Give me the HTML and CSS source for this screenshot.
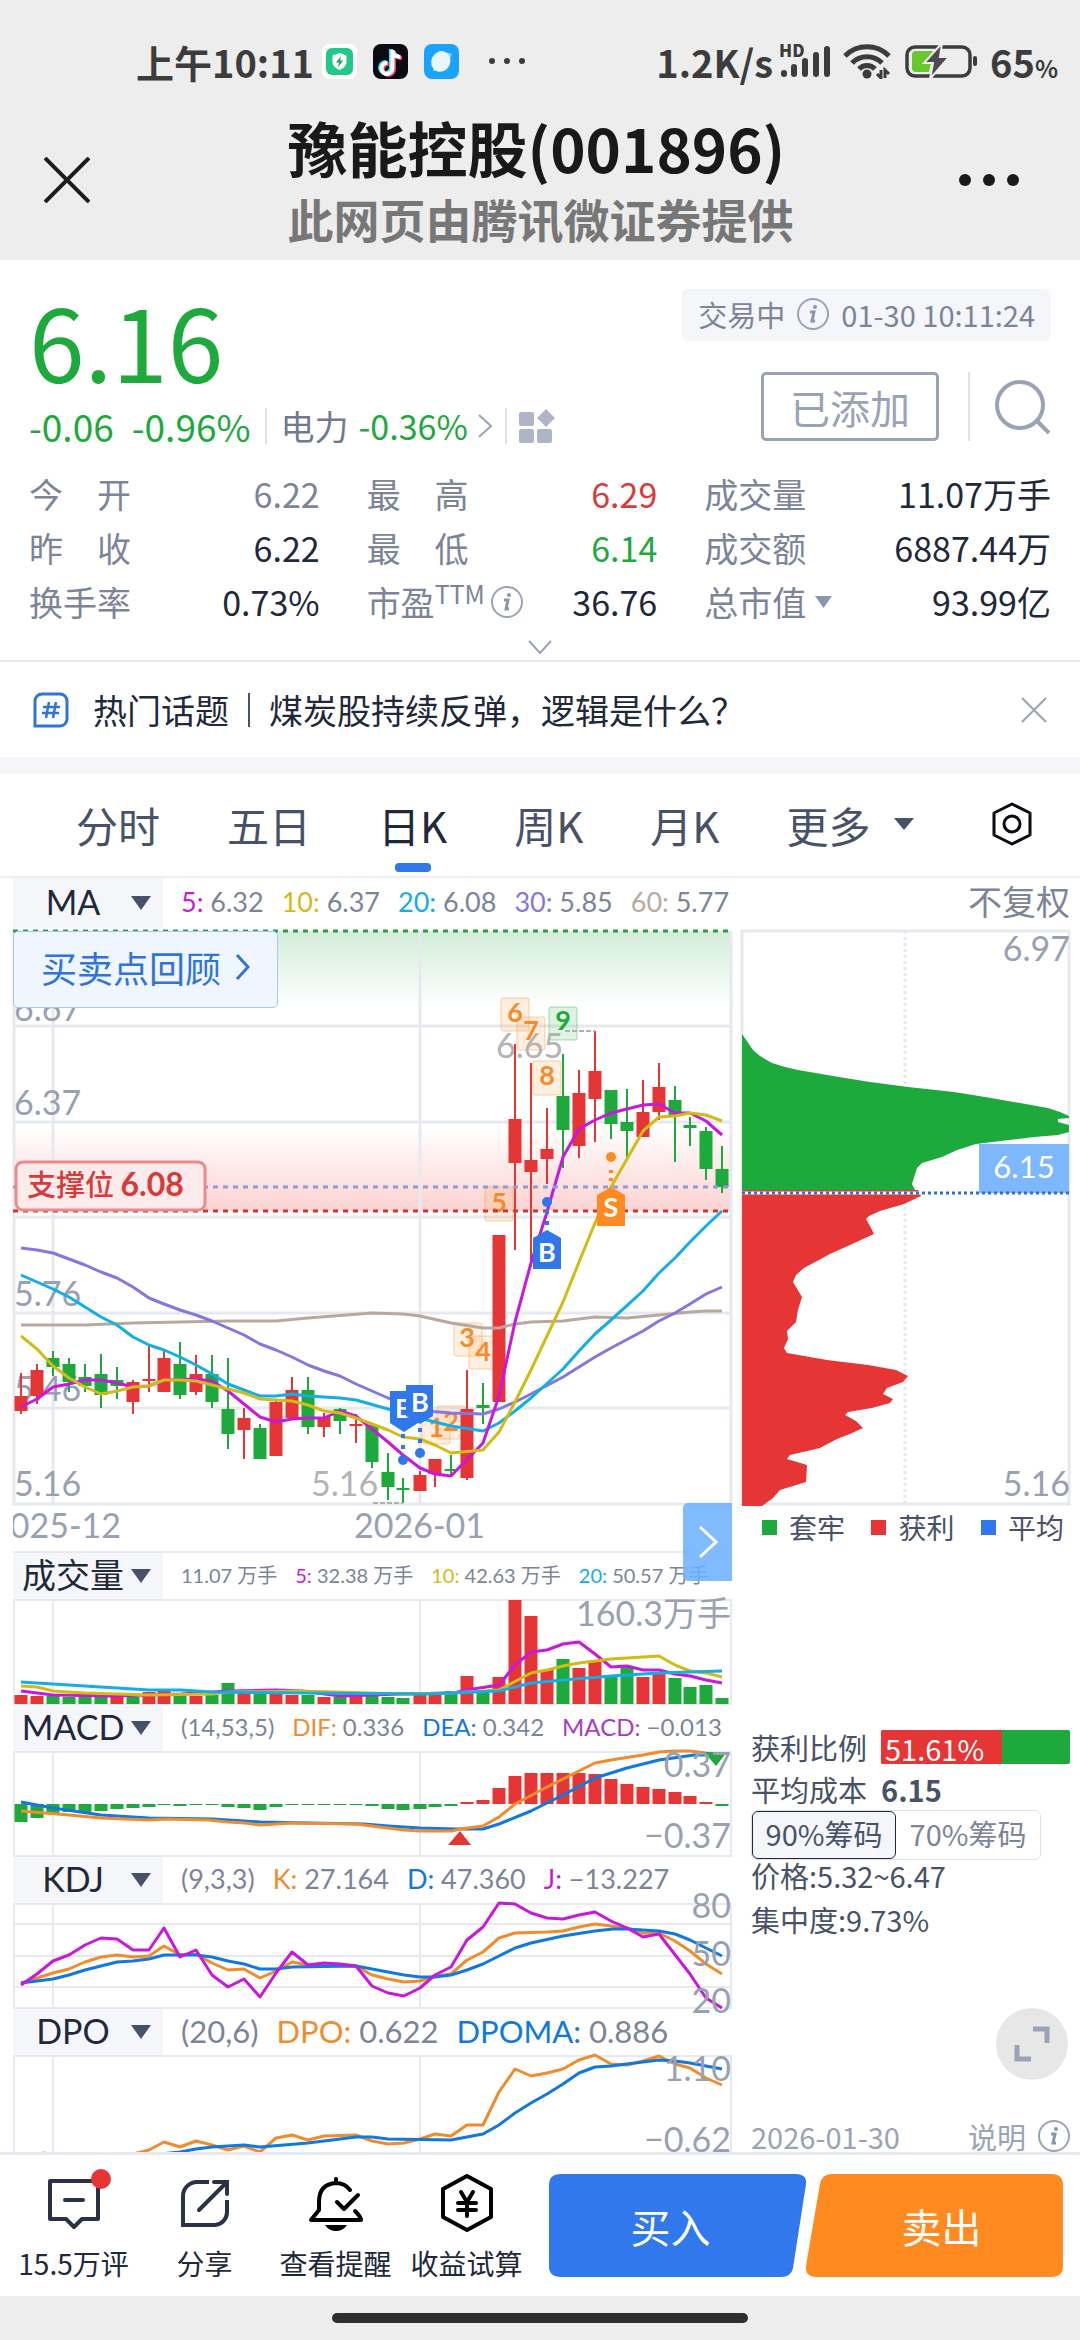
FILE: index.html
```html
<!DOCTYPE html>
<html lang="zh-CN">
<head>
<meta charset="utf-8">
<meta name="viewport" content="width=device-width, initial-scale=1">
<title>豫能控股(001896)</title>
<link rel="stylesheet" href="styles.css">
</head>
<body>
<header class="top">
  <div class="status">
    <div class="status-left">
      <span>上午10:11</span>
      <svg class="app" viewBox="0 0 35 35"><rect width="35" height="35" rx="8" fill="#fff"/><rect x="4" y="4" width="27" height="27" rx="6" fill="#1fc98a"/><path d="M17.500 9l7 2.500v6c0 4-3 7-7 8.500-4-1.500-7-4.500-7-8.500v-6z" fill="#fff"/><path d="M19 12l-5 6.500h3l-1 5 5-7h-3z" fill="#18a06d"/></svg>
      <svg class="app" viewBox="0 0 35 35"><rect width="35" height="35" rx="8" fill="#0b0b14"/><g fill="none" stroke-width="4"><path d="M18 5v18a5.500 5.500 0 1 1-5-5M18 6c1 4 4 6 8 6" stroke="#35e6e6"/><path d="M21 7v18a5.500 5.500 0 1 1-5-5M21 8c1 4 4 6 8 6" stroke="#f3365c"/><path d="M19.500 6v18a5.500 5.500 0 1 1-5-5M19.500 7c1 4 4 6 8 6" stroke="#fff"/></g></svg>
      <svg class="app" viewBox="0 0 35 35"><rect width="35" height="35" rx="8" fill="#18a3ff"/><path d="M22 8l6 2-2 5zM9 27l1-5 4 5z" fill="#8cd0ff"/><ellipse cx="17" cy="17.500" rx="9.500" ry="10.500" fill="#e9f6ff" transform="rotate(25 17 17)"/></svg>
      <svg class="dots" viewBox="0 0 36 8"><g fill="#3a3a3a"><circle cx="3" cy="4" r="3"/><circle cx="18" cy="4" r="3"/><circle cx="33" cy="4" r="3"/></g></svg>
    </div>
    <div class="status-right">
      <span>1.2K/s</span>
      <span class="signal"><b>HD</b><svg viewBox="0 0 50 34"><g fill="#3c3c3c"><rect y="26" width="6" height="7" rx="3"/><rect x="10" y="20" width="6" height="13" rx="3"/><rect x="21" y="14" width="6" height="19" rx="3"/><rect x="32" y="8" width="6" height="25" rx="3"/><rect x="43" y="2" width="6" height="31" rx="3"/></g></svg></span>
      <svg class="wifi" viewBox="0 0 48 36"><g fill="none" stroke="#3c3c3c" stroke-width="5"><path d="M2 13a31 31 0 0 1 44 0"/><path d="M9 20a21 21 0 0 1 30 0"/><path d="M16 26a11 11 0 0 1 16 0"/></g><circle cx="24" cy="31" r="4.500" fill="#3c3c3c"/><path d="M38 27v8l-4-4M42 35v-8l4 4" fill="none" stroke="#3c3c3c" stroke-width="3"/></svg>
      <svg class="battery" viewBox="0 0 73 36"><rect x="2" y="4" width="63" height="29" rx="8" fill="none" stroke="#3c3c3c" stroke-width="3.500"/><path d="M11 8h17L21 20h5l-2 9H11a4 4 0 0 1-4-4V12a4 4 0 0 1 4-4z" fill="#65c92c"/><path d="M37 0L19 20h9l-3 16L44 14h-9z" fill="#4c4c4c" stroke="#ededed" stroke-width="2"/><rect x="68" y="13" width="4" height="10" rx="2" fill="#3c3c3c"/></svg>
      <span class="level">65<small>%</small></span>
    </div>
  </div>
  <div class="titlebar">
    <button class="plain" aria-label="关闭"><svg width="46" height="46" viewBox="0 0 46 46"><path d="M1 1l44 44M45 1L1 45" stroke="#1c1c1c" stroke-width="4"/></svg></button>
    <div class="titles"><h1>豫能控股(001896)</h1><p>此网页由腾讯微证券提供</p></div>
    <button class="plain" aria-label="更多选项"><svg width="60" height="12" viewBox="0 0 60 12"><g fill="#191919"><circle cx="6" cy="6" r="6"/><circle cx="30" cy="6" r="6"/><circle cx="54" cy="6" r="6"/></g></svg></button>
  </div>
</header>

<main>
<section class="quote">
  <div class="quote-head">
    <div class="price-box">
      <strong class="price">6.16</strong>
      <div class="change">
        <span class="big">-0.06</span><span class="big pct">-0.96%</span>
        <a class="sector" href="#sector">电力 <em>-0.36%</em><svg width="15" height="24" viewBox="0 0 15 24"><path d="M1 1l12 11L1 23" fill="none" stroke="#9aa3b5" stroke-width="2"/></svg></a>
        <svg class="grid-icon" width="37" height="35" viewBox="0 0 37 35"><g fill="#adb5c6"><rect y="3" width="15" height="14" rx="2"/><rect y="20" width="15" height="14" rx="2"/><rect x="18" y="20" width="15" height="14" rx="2"/><path d="M27 0l9 9-9 9-9-9z"/></g></svg>
      </div>
    </div>
    <div class="quote-side">
      <p class="badge">交易中 <svg class="info" viewBox="0 0 32 32"><circle cx="16" cy="16" r="15" fill="none" stroke="#9aa3b5" stroke-width="2"/><circle cx="18" cy="9" r="2" fill="#8c96aa"/><path d="M13 14h4l-2 9h3" fill="none" stroke="#8c96aa" stroke-width="3"/></svg> 01-30 10:11:24</p>
      <div class="actions">
        <button class="added">已添加</button>
        <button class="plain search" aria-label="搜索"><svg width="56" height="56" viewBox="0 0 56 56"><circle cx="25" cy="26" r="23" fill="none" stroke="#9aa3b5" stroke-width="4"/><path d="M42 42l12 12" stroke="#9aa3b5" stroke-width="4"/></svg></button>
      </div>
    </div>
  </div>
  <dl class="stats">
    <div><dt>今　开</dt><dd class="gray">6.22</dd></div>
    <div><dt>最　高</dt><dd class="red">6.29</dd></div>
    <div><dt>成交量</dt><dd>11.07万手</dd></div>
    <div><dt>昨　收</dt><dd>6.22</dd></div>
    <div><dt>最　低</dt><dd class="green">6.14</dd></div>
    <div><dt>成交额</dt><dd>6887.44万</dd></div>
    <div><dt>换手率</dt><dd>0.73%</dd></div>
    <div><dt>市盈<sup>TTM</sup><svg class="info" viewBox="0 0 32 32"><circle cx="16" cy="16" r="15" fill="none" stroke="#9aa3b5" stroke-width="2"/><circle cx="18" cy="9" r="2" fill="#8c96aa"/><path d="M13 14h4l-2 9h3" fill="none" stroke="#8c96aa" stroke-width="3"/></svg></dt><dd>36.76</dd></div>
    <div><dt>总市值<svg class="tri" viewBox="0 0 19 12"><path d="M1 0h17L9.500 12z" fill="#8c96aa"/></svg></dt><dd>93.99亿</dd></div>
  </dl>
  <button class="plain expand" aria-label="展开"><svg width="24" height="15" viewBox="0 0 24 15"><path d="M1 1l11 12L23 1" fill="none" stroke="#9aa3b5" stroke-width="2"/></svg></button>
</section>

<section class="topic">
  <svg width="36" height="36" viewBox="0 0 36 36"><path d="M9 2h18a7 7 0 0 1 7 7v18a7 7 0 0 1-7 7H2V9a7 7 0 0 1 7-7z" fill="none" stroke="#2f73dd" stroke-width="3"/><path d="M16 10l-3 16M23 10l-3 16M10 15h17M9 21h17" stroke="#2f73dd" stroke-width="2.500"/></svg>
  <a href="#topic">热门话题<i></i>煤炭股持续反弹，逻辑是什么？</a>
  <button class="plain" aria-label="关闭话题"><svg width="26" height="26" viewBox="0 0 26 26"><path d="M1 1l24 24M25 1L1 25" stroke="#9aa3b5" stroke-width="2"/></svg></button>
</section>

<nav class="tabs">
  <button>分时</button><button>五日</button><button class="on">日K</button><button>周K</button><button>月K</button>
  <button>更多<svg width="20" height="12" viewBox="0 0 20 12"><path d="M0 0h20L10 12z" fill="#475268"/></svg></button>
  <button class="gear" aria-label="设置"><svg width="42" height="44" viewBox="0 0 42 44"><path d="M21 2l18 9v22l-18 9-18-9V11z" fill="none" stroke="#0a0a12" stroke-width="3" stroke-linejoin="round"/><circle cx="21" cy="22" r="8" fill="none" stroke="#0a0a12" stroke-width="3"/></svg></button>
</nav>

<section class="charts">
  <div class="left">
    <div class="legend s27">
      <label class="pick"><select aria-label="主图指标"><option>MA</option></select><svg viewBox="0 0 20 14"><path d="M0 0h20L10 14z" fill="#475268"/></svg></label>
      <span><b class="c1">5:</b> 6.32</span><span><b class="c2">10:</b> 6.37</span><span><b class="c3">20:</b> 6.08</span><span><b class="c4">30:</b> 5.85</span><span><b class="c5">60:</b> 5.77</span>
    </div>
    <div class="kline">
      <svg class="plot" viewBox="13 928 719 625">
        <defs>
          <linearGradient id="gd" x1="0" y1="0" x2="0" y2="1"><stop offset="0" stop-color="#d1edd8"/><stop offset="1" stop-color="#fff"/></linearGradient>
          <linearGradient id="rd" x1="0" y1="0" x2="0" y2="1"><stop offset="0" stop-color="#fff"/><stop offset="1" stop-color="#fbd3d2"/></linearGradient>
        </defs>
        <rect x="13" y="931" width="718" height="76" fill="url(#gd)"/>
        <rect x="13" y="1125" width="718" height="86" fill="url(#rd)"/>
        <path class="grid" d="M14 931V1504H731V931M14 1026H731M14 1122H731M14 1217H731M14 1313H731M14 1408H731M53 931V1504M420 931V1504"/>
        <path class="grid thin" d="M13 1552H731"/>
        <g class="axis"><text x="14" y="1021">6.67</text><text x="14" y="1115">6.37</text><text x="14" y="1306">5.76</text><text x="14" y="1401">5.46</text><text x="14" y="1496">5.16</text></g>
        <svg x="13" y="1506" width="400" height="44" viewBox="13 1506 400 44"><text class="axis" x="-10" y="1538">2025-12</text></svg>
        <text class="axis" x="354" y="1538">2026-01</text>
        <g class="tag"><rect x="422" y="1411" width="28" height="33"/><rect x="437" y="1406" width="28" height="33"/><rect x="454" y="1323" width="28" height="33"/><rect x="469" y="1336" width="28" height="33"/><rect x="485" y="1187" width="28" height="34"/><rect x="501" y="998" width="28" height="33"/><rect x="517" y="1017" width="28" height="33"/><rect x="533" y="1061" width="28" height="34"/><rect class="tag-g" x="549" y="1007" width="28" height="33"/></g>
        <g class="tag-t"><text x="436" y="1437">1</text><text x="451" y="1431">2</text><text x="467" y="1347">3</text><text x="483" y="1361">4</text><text x="499" y="1212">5</text></g>
        <path class="wick up" d="M21 1373V1414M37 1364V1404M133 1380V1414M149 1346V1392M164 1351V1392M196 1355V1395M244 1408V1459M276 1399V1456M292 1377V1420M324 1413V1437M356 1414V1443M420 1471V1491M435 1459V1487M467 1370V1480M515 1044V1250M531 1063V1267M547 1108V1184M579 1070V1158M595 1031V1142M643 1080V1137M659 1063V1120"/>
        <path class="wick dn" d="M53 1351V1376M69 1358V1392M85 1364V1392M101 1354V1408M117 1367V1399M180 1342V1399M212 1355V1408M228 1358V1449M260 1424V1459M308 1377V1434M340 1408V1434M372 1424V1468M388 1453V1500M403 1478V1503M451 1455V1475M483 1383V1424M563 1054V1168M611 1090V1139M627 1089V1159M675 1086V1162M690 1117V1146M706 1127V1180M722 1146V1193"/>
        <path class="body up" d="M21 1396V1411M37 1370V1396M133 1382V1402M149 1379V1381M164 1358V1392M196 1374V1392M244 1418V1430M276 1402V1456M292 1390V1418M324 1417V1427M356 1424V1426M420 1475V1491M435 1459V1474M467 1409V1478M499 1235V1402M515 1119V1163M531 1160V1172M547 1149V1159M579 1093V1146M595 1071V1099M643 1112V1137M659 1087V1112"/>
        <path class="body dn" d="M53 1358V1367M69 1364V1382M85 1377V1386M101 1374V1395M117 1380V1386M180 1364V1395M212 1374V1402M228 1409V1434M260 1428V1459M308 1390V1427M340 1409V1421M372 1425V1462M388 1472V1487M403 1488V1490M451 1469V1471M483 1405V1408M563 1096V1130M611 1090V1124M627 1122V1131M675 1100V1115M690 1125V1128M706 1131V1169M722 1169V1187"/>
        <g class="low"><text x="311" y="1496">5.16</text><text x="496" y="1058">6.65</text><path d="M373 1503H403M565 1031H595" stroke="#b0b0b0" stroke-width="2" stroke-dasharray="5 2"/></g>
        <g class="line">
          <path class="l5" d="M21 1325H85L133 1323L180 1322L228 1321H276L308 1318L372 1313L403 1314L420 1316L451 1323L483 1328H499L515 1324L531 1322L563 1321L579 1319L595 1317L627 1318L659 1315L690 1312L706 1311H722"/>
          <path class="l4" d="M21 1248L37 1250L53 1253L85 1265L101 1272L117 1278L133 1287L149 1298L164 1304L180 1310L196 1315L212 1321L228 1328L244 1335L260 1344L276 1350L292 1357L308 1365L324 1371L340 1376L356 1384L372 1391L388 1398L427 1411L451 1413L483 1414L499 1409L515 1402L531 1394L563 1377L579 1367L595 1357L611 1348L643 1331L659 1321L675 1313L690 1304L706 1294L722 1287"/>
          <path class="l3" d="M21 1275L53 1289L69 1297L85 1307L101 1317L117 1325L133 1337L149 1345L164 1350L180 1357L196 1365L212 1374L228 1384L244 1390L260 1396H276L292 1394L308 1396L340 1398L356 1400L388 1409L427 1420L451 1426L483 1431L499 1423L515 1411L531 1398L563 1369L579 1351L595 1334L611 1320L643 1291L659 1273L675 1258L690 1242L706 1226L722 1211"/>
          <path class="l1" d="M21 1407L37 1399L53 1387L69 1384L85 1380H101L117 1383L133 1387L149 1386L164 1380L196 1379L212 1381L228 1391L260 1417L276 1422L292 1419L308 1418H324L340 1411L356 1416L372 1429L388 1442L403 1455L420 1468L435 1474L451 1476L483 1443L499 1396L515 1322L531 1263L547 1212L563 1157L579 1129L595 1120L611 1113L627 1109L643 1105L659 1104L675 1113H690L706 1121L722 1135"/>
          <path class="l2" d="M21 1336L37 1349L53 1366L69 1378L85 1387L101 1394L117 1391L133 1387L149 1386L164 1380H180L196 1381L212 1385L244 1393L260 1399L292 1401L308 1405L324 1411L340 1413L356 1418L372 1424L388 1430L403 1437L420 1439L435 1445L451 1453L483 1450L499 1432L515 1402L531 1370L547 1336L563 1302L579 1262L595 1223L611 1187L643 1131L659 1117L675 1116L690 1113L706 1115L722 1121"/>
        </g>
        <g class="tag-t"><text x="515" y="1022">6</text><text x="531" y="1040">7</text><text x="547" y="1085">8</text><text class="tag-n" x="563" y="1030">9</text></g>
        <g class="dash"><path d="M13 931H731" stroke="#2c9c48"/><path d="M13 1187H731" stroke="#8f9bd3"/><path d="M13 1211H731" stroke="#cf3535"/></g>
        <g fill="#2f77ea"><circle cx="403" cy="1460" r="5"/><path d="M390 1391h28v32l-14 9-14-9z"/></g>
        <text class="bs" x="404" y="1418">B</text>
        <g fill="#2f77ea"><circle cx="420" cy="1453" r="5"/><circle cx="547" cy="1202" r="5"/><path d="M406 1385h27v31l-13 8-14-8z"/><path d="M533 1238l14-8 14 8v31h-28z"/><path d="M403 1434v20M420 1428v18M547 1210v20" stroke="#2f77ea" stroke-width="4" stroke-dasharray="4 7"/></g>
        <g fill="#ff8b20"><circle cx="611" cy="1157" r="5"/><path d="M597 1195l14-8 14 8v31h-28z"/><path d="M611 1170v14" stroke="#ff8b20" stroke-width="4" stroke-dasharray="3 5"/></g>
        <g class="bs"><text x="420" y="1412">B</text><text x="547" y="1262">B</text><text x="611" y="1217">S</text></g>
        <rect x="16" y="1162" width="189" height="48" rx="7" fill="#fcebea" stroke="#e98b8b" stroke-width="3"/>
        <text class="support" x="27" y="1196">支撑位 <tspan class="num">6.08</tspan></text>
      </svg>
      <button class="review">买卖点回顾 <svg width="15" height="26" viewBox="0 0 15 26"><path d="M2 1l11 12L2 25" fill="none" stroke="#2f73dd" stroke-width="3"/></svg></button>
      <button class="next" aria-label="展开筹码"><svg width="20" height="34" viewBox="0 0 20 34"><path d="M2 2l16 15L2 32" fill="none" stroke="#fff" stroke-width="3"/></svg></button>
    </div>

    <div class="legend s20">
      <label class="pick"><select aria-label="副图一指标"><option>成交量</option></select><svg viewBox="0 0 20 14"><path d="M0 0h20L10 14z" fill="#475268"/></svg></label>
      <span>11.07 万手</span><span><b class="c1">5:</b> 32.38 万手</span><span><b class="c2">10:</b> 42.63 万手</span><span><b class="c3">20:</b> 50.57 万手</span>
    </div>
    <svg class="plot" viewBox="13 1599 719 106">
      <path class="grid thin" d="M14 1600H731V1704H14ZM53 1600V1704M420 1600V1704"/>
      <path class="body up" d="M21 1704V1695M37 1704V1696M117 1704V1697M149 1704V1692M164 1704V1691M196 1704V1696M244 1704V1693M276 1704V1694M292 1704V1695M324 1704V1697M356 1704V1696M420 1704V1695M435 1704V1692M467 1704V1676M499 1704V1677M515 1704V1600M531 1704V1616M547 1704V1670M579 1704V1668M595 1704V1662M643 1704V1677M659 1704V1673"/>
      <path class="body dn" d="M53 1704V1696M69 1704V1697M85 1704V1696M101 1704V1697M133 1704V1697M180 1704V1694M212 1704V1695M228 1704V1683M260 1704V1693M308 1704V1695M340 1704V1697M372 1704V1695M388 1704V1697M403 1704V1698M451 1704V1691M483 1704V1693M563 1704V1659M611 1704V1676M627 1704V1667M675 1704V1678M690 1704V1687M706 1704V1685M722 1704V1698"/>
      <text class="axis end" x="731" y="1626">160.3万手</text>
      <g class="line"><path class="l1" d="M21 1691L53 1695L113 1696L181 1694L198 1693L228 1691L276 1690L302 1691L340 1696L401 1694L453 1693L467 1690L499 1685L515 1665L531 1652L547 1650L563 1644L579 1642L595 1654L611 1667L627 1666L643 1670H659L675 1674L690 1676L706 1680L722 1683"/><path class="l2" d="M21 1686L37 1687L53 1691L85 1693L149 1695L212 1694L228 1692L302 1691L404 1694L451 1693L499 1690L531 1673L547 1670L563 1666L579 1663L611 1659L659 1656L675 1665L690 1671L706 1673L722 1677"/><path class="l3" d="M21 1682L53 1684L85 1686L117 1688L149 1690H181L212 1692L302 1693L425 1694L499 1691L531 1683L563 1680L611 1676L659 1673L690 1672L722 1671"/></g>
    </svg>

    <div class="legend s24">
      <label class="pick"><select aria-label="副图二指标"><option>MACD</option></select><svg viewBox="0 0 20 14"><path d="M0 0h20L10 14z" fill="#475268"/></svg></label>
      <span>(14,53,5)</span><span><b class="c6">DIF:</b> 0.336</span><span><b class="c7">DEA:</b> 0.342</span><span><b class="c8">MACD:</b> −0.013</span>
    </div>
    <svg class="plot" viewBox="13 1751 719 106">
      <path class="grid thin" d="M14 1752H731V1856H14ZM53 1752V1856M420 1752V1856"/>
      <path class="body dn" d="M21 1804V1822M37 1804V1818M53 1804V1813M69 1804V1812M85 1804V1812M101 1804V1811M117 1804V1809M133 1804V1808M149 1804V1807M164 1804V1805M180 1804V1806M196 1804V1805M212 1804V1805M228 1804V1807M244 1804V1808M260 1804V1810M276 1804V1807M292 1804V1805M308 1804V1805M324 1804V1805M340 1804V1805M356 1804V1805M372 1804V1806M388 1804V1809M403 1804V1810M420 1804V1809M435 1804V1807M451 1804V1806M722 1804V1806"/>
      <path class="body up" d="M467 1804V1802M483 1804V1800M499 1804V1788M515 1804V1776M531 1804V1773M547 1804V1773M563 1804V1773M579 1804V1773M595 1804V1774M611 1804V1779M627 1804V1784M643 1804V1787M659 1804V1789M675 1804V1792M690 1804V1796M706 1804V1802"/>
      <g class="line"><path class="l7" d="M21 1802L53 1808L101 1815L149 1818L212 1819L260 1822L308 1823L364 1824L388 1826L420 1828L455 1829H483L499 1824L531 1811L563 1795L595 1778L627 1768L659 1760L694 1755H706"/><path class="l6" d="M21 1811L69 1815L101 1818L149 1820L165 1819L208 1820L228 1822L245 1823L260 1825L292 1823L356 1824L404 1830L420 1831H452L460 1829L483 1826L499 1817L515 1804L547 1787L579 1771L595 1763L611 1760L643 1755L659 1752L675 1751H690L706 1753"/></g>
      <path d="M448 1845h23l-11-14z" fill="#e53535"/><path d="M704 1752h23l-11 14z" fill="#1ea93c"/>
      <text class="axis end" x="731" y="1777">0.37</text><text class="axis end" x="731" y="1848">−0.37</text>
    </svg>

    <div class="legend s27">
      <label class="pick"><select aria-label="副图三指标"><option>KDJ</option></select><svg viewBox="0 0 20 14"><path d="M0 0h20L10 14z" fill="#475268"/></svg></label>
      <span>(9,3,3)</span><span><b class="c6">K:</b> 27.164</span><span><b class="c7">D:</b> 47.360</span><span><b class="c1">J:</b> −13.227</span>
    </div>
    <svg class="plot" viewBox="13 1902 719 106">
      <path class="grid thin" d="M14 1903H731V2007H14ZM53 1903V2007M420 1903V2007M14 1923H731M14 1955H731M14 1986H731"/>
      <g class="line"><path class="l6" d="M21 1982L37 1977L53 1972L69 1968L85 1961L101 1956L117 1954L133 1956L149 1955L164 1945L180 1954L196 1953L212 1962L228 1969L244 1968L260 1977L276 1970L292 1961L308 1964L356 1965L372 1974L388 1978L404 1981L420 1980L435 1975L451 1973L467 1959L483 1951L499 1937L515 1932L547 1931L563 1930L579 1926L595 1923L627 1927L643 1932H659L675 1940L690 1950L706 1963L722 1973"/><path class="l7" d="M21 1982L37 1980L53 1978L69 1974L85 1969L101 1965L117 1961L133 1960L149 1958L164 1954H196L212 1956L228 1960L244 1963L260 1968H276L292 1966L356 1965L372 1968L404 1974L420 1976H435L451 1974L467 1969L483 1963L499 1955L515 1947L531 1942L563 1935L595 1930L613 1928H627L659 1930L675 1933L690 1939L706 1947L722 1955"/><path class="l1" d="M21 1984L37 1973L53 1960L69 1954L85 1944L101 1937L117 1938L133 1949H149L164 1927L180 1956L196 1949L212 1974L228 1986L244 1978L260 1996L276 1972L292 1951L308 1964L324 1962L340 1963L356 1965L372 1985L388 1992L404 1995L420 1987L435 1974L451 1966L467 1939L483 1926L499 1902L515 1903L531 1912L547 1917L563 1918L579 1914L595 1911L611 1920L627 1927L643 1936L659 1933L690 1973L706 1997L722 2007"/></g>
      <g class="axis end"><text x="731" y="1917">80</text><text x="731" y="1965">50</text><text x="731" y="2012">20</text></g>
    </svg>

    <div class="legend s31">
      <label class="pick"><select aria-label="副图四指标"><option>DPO</option></select><svg viewBox="0 0 20 14"><path d="M0 0h20L10 14z" fill="#475268"/></svg></label>
      <span>(20,6)</span><span><b class="c6">DPO:</b> 0.622</span><span><b class="c7">DPOMA:</b> 0.886</span>
    </div>
    <svg class="plot" viewBox="13 2054 719 106">
      <path class="grid thin" d="M14 2055H731V2159H14ZM53 2054V2159M420 2054V2159"/>
      <g class="line"><path class="l6" d="M21 2156L44 2152L69 2156H120L133 2153L149 2149L164 2141L180 2146L196 2140L212 2144L228 2149L244 2145L260 2151L276 2137L292 2134L308 2139L324 2135L356 2134L372 2140L388 2143L404 2142L420 2138L435 2133L451 2135L467 2124H483L499 2091L515 2068L531 2075L547 2072L563 2068L579 2059L595 2054L611 2063L627 2064L643 2060L659 2055L675 2063L690 2067L706 2077L722 2084"/><path class="l7" d="M130 2158L160 2153L180 2151L196 2148L212 2146L244 2144L260 2146L308 2142L340 2138L356 2136H372L388 2138L451 2139L467 2136L483 2133L499 2124L515 2112L531 2102L547 2093L563 2083L579 2072L595 2066L611 2065L643 2061L659 2059L675 2060L690 2062L722 2068"/></g>
      <text class="axis end" x="731" y="2080">1.10</text><text class="axis end" x="731" y="2151">−0.62</text>
    </svg>
  </div>

  <div class="right">
    <p class="adjust">不复权</p>
    <svg class="plot" viewBox="740 928 330 582">
      <path class="grid" d="M742 931H1069V1504H742Z"/>
      <path d="M905 931V1504" stroke="#e6e8ee" stroke-width="3" stroke-dasharray="3 3"/>
      <path fill="#1ea93c" d="M742 1034L753 1050L760 1056L772 1063L785 1067L798 1070L839 1077L870 1082L908 1087L954 1092L991 1098L1020 1103L1048 1108L1060 1112L1069 1116V1118L1058 1119V1122L1069 1125V1132L1058 1135L1034 1137L1009 1140L976 1144L957 1150L942 1157L922 1163L917 1168L912 1184L915 1190H742Z"/>
      <path fill="#e53535" d="M742 1190H918L921 1196L904 1204L880 1211L869 1216L866 1219L870 1226L874 1234L850 1245L830 1254L804 1268L796 1275L793 1282L802 1297L798 1310L796 1322L787 1331L788 1339L784 1348L787 1353L827 1360L868 1365L896 1370L908 1376L903 1382L887 1388L883 1394L893 1399L890 1403L872 1408L848 1412L845 1415L856 1421L863 1428L850 1434L837 1439L820 1448L790 1455L787 1459L807 1465L806 1482L780 1490L773 1498L762 1506H742Z"/>
      <rect x="979" y="1144" width="90" height="49" fill="#7db8ff"/>
      <path d="M742 1193H920" stroke="#fff" stroke-width="3"/><path d="M742 1193H1069" stroke="#2f6fd6" stroke-width="3" stroke-dasharray="3 3"/>
      <text x="1024" y="1178" class="avg">6.15</text>
      <text class="axis end" x="1070" y="961">6.97</text><text class="axis end" x="1070" y="1496">5.16</text>
    </svg>
    <ul class="keys"><li class="k-g">套牢</li><li class="k-r">获利</li><li class="k-b">平均</li></ul>
    <div class="chips">
      <div class="row"><span>获利比例</span><div class="ratio"><span style="width:64%">51.61%</span></div></div>
      <div class="row"><span>平均成本</span><b>6.15</b></div>
      <div class="seg"><button class="on">90%筹码</button><button>70%筹码</button></div>
      <p>价格:5.32~6.47</p>
      <p>集中度:9.73%</p>
    </div>
    <button class="full" aria-label="全屏"><svg width="36" height="36" viewBox="0 0 36 36"><path d="M19 3h14v14M3 19v14h14" fill="none" stroke="#9aa3b5" stroke-width="5"/></svg></button>
    <div class="foot"><time>2026-01-30</time><a href="#help">说明 <svg class="info" viewBox="0 0 32 32"><circle cx="16" cy="16" r="15" fill="none" stroke="#9aa3b5" stroke-width="2"/><circle cx="18" cy="9" r="2" fill="#8c96aa"/><path d="M13 14h4l-2 9h3" fill="none" stroke="#8c96aa" stroke-width="3"/></svg></a></div>
  </div>
</section>
</main>

<footer class="bar">
  <button class="item"><svg width="64" height="64" viewBox="0 0 64 64"><path d="M8 13h48v38H40l-8 8-8-8H8z" fill="none" stroke="#2a3245" stroke-width="4" stroke-linejoin="round"/><path d="M23 32h18" stroke="#2a3245" stroke-width="4" stroke-linecap="round"/><circle cx="59" cy="11" r="10" fill="#e53535"/></svg>15.5万评</button>
  <button class="item"><svg width="64" height="64" viewBox="0 0 64 64"><g fill="none" stroke="#2a3245" stroke-width="4"><path d="M36 14H24A14 14 0 0 0 10 28V57H42A13 13 0 0 0 54 44V32"/><path d="M41 14H54V26M54 14L26 42" stroke-linecap="round"/></g></svg>分享</button>
  <button class="item"><svg width="64" height="64" viewBox="0 0 64 64"><g fill="none" stroke="#000" stroke-width="4" stroke-linecap="round" stroke-linejoin="round"><path d="M32 11v4M46 22Q41 15 32 15Q15 16 15 34V42L7 52H57Q57 49 51 43M33 34l7 7 14-14"/></g><path d="M21 57h22q-4 6-11 6t-11-6z"/></svg>查看提醒</button>
  <button class="item"><svg width="64" height="64" viewBox="0 0 64 64"><g fill="none" stroke="#000" stroke-width="4" stroke-linecap="round" stroke-linejoin="round"><path d="M32 8l24 13v28L32 62 8 49V21z"/><path d="M26 24l6 10 6-10M32 34v14M23 35h18M23 42h18"/></g></svg>收益试算</button>
  <button class="trade buy"><svg viewBox="0 0 257 103" preserveAspectRatio="none"><path d="M12 0H247Q258 0 257 10L244 94Q242 103 232 103H12Q0 103 0 92V11Q0 0 12 0Z" fill="#3078ec"/></svg><span>买入</span></button>
  <button class="trade sell"><svg viewBox="0 0 258 103" preserveAspectRatio="none"><path d="M26 0H246Q258 0 258 11V92Q258 103 246 103H10Q-1 103 0 92L14 10Q16 0 26 0Z" fill="#ff8b20"/></svg><span>卖出</span></button>
</footer>
<div class="home"><i></i></div>
</body>
</html>
```

FILE: styles.css
```css
* { box-sizing: border-box; }
body {
  margin: 0;
  height: 100vh;
  display: flex;
  flex-direction: column;
  background: #fff;
  color: #20283a;
  font-family: "Noto Sans CJK SC", "Noto Sans", sans-serif;
  overflow: hidden;
}
h1, p, dl, dd, ul { margin: 0; padding: 0; }
svg { display: block; flex: none; }
a { color: inherit; text-decoration: none; }
button { font: inherit; color: inherit; border: 0; padding: 0; background: none; }
.plain { display: flex; align-items: center; }

.top { background: #ededed; flex: none; }
.status {
  display: flex;
  justify-content: space-between;
  align-items: center;
  height: 100px;
  padding: 22px 22px 0 136px;
  font-size: 38px;
  font-weight: 700;
  color: #3c3c3c;
  white-space: nowrap;
}
.status-left, .status-right { display: flex; align-items: center; }
.app { width: 35px; height: 35px; margin-left: 16px; }
.status-left span + .app { margin-left: 8px; }
.dots { width: 36px; height: 8px; margin-left: 30px; }
.status-right { gap: 12px; }
.signal { position: relative; width: 50px; margin-left: -4px; }
.signal svg { width: 50px; height: 34px; }
.signal b { position: absolute; left: -2px; top: -4px; font-size: 17px; line-height: 20px; }
.wifi { width: 48px; height: 36px; }
.battery { width: 73px; height: 36px; margin-left: 2px; }
.level small { font-size: 24px; }
.titlebar {
  display: grid;
  grid-template-columns: 60px 1fr 60px;
  align-items: center;
  height: 160px;
  padding: 0 61px 0 44px;
}
.titles { width: max-content; margin: 0 auto; padding-left: 18px; }
.titles h1 { font-size: 60px; line-height: 76px; font-weight: 700; color: #191919; }
.titles p { font-size: 46px; line-height: 66px; font-weight: 700; color: #777; }

main { flex: 1; min-height: 0; overflow: hidden; display: flex; flex-direction: column; }
main > * { flex: none; }

.quote { padding: 0 29px; height: 402px; border-bottom: 2px solid #e6e8ef; }
.quote-head { display: flex; justify-content: space-between; height: 207px; }
.price { display: block; padding-top: 24px; font-size: 100px; line-height: 112px; font-weight: 400; color: #1ea93c; }
.change { display: flex; align-items: center; height: 60px; color: #1ea93c; white-space: nowrap; }
.change .big { font-size: 37px; }
.change .pct { margin-left: 18px; }
.sector { display: flex; align-items: center; gap: 10px; margin-left: 14px; padding: 0 12px 0 14px; font-size: 34px; line-height: 36px; color: #6f7a90; border: solid #dfe2ea; border-width: 0 2px; }
.sector em { font-style: normal; color: #1ea93c; }
.grid-icon { margin-left: 12px; }
.quote-side { padding-top: 29px; display: flex; flex-direction: column; align-items: flex-end; }
.badge { display: flex; align-items: center; gap: 12px; height: 52px; padding: 0 16px 3px; border-radius: 6px; background: #f4f6fa; color: #7b8499; font-size: 29px; }
.info { width: 32px; height: 32px; }
.actions { display: flex; align-items: center; margin-top: 31px; }
.added { width: 178px; height: 69px; border: 3px solid #9aa3b5; border-radius: 5px; color: #9aa3b5; font-size: 40px; line-height: 60px; }
.search { height: 69px; margin-left: 29px; padding-left: 25px; border-left: 2px solid #dfe2ea; }
.stats { display: grid; grid-template-columns: 290fr 290fr 346fr; column-gap: 47px; font-size: 34px; line-height: 54px; }
.stats div { display: flex; justify-content: space-between; white-space: nowrap; }
.stats dt { display: flex; align-items: center; color: #7b8499; }
.stats sup { font-size: 25px; line-height: 36px; align-self: flex-start; }
.stats .info { margin-left: 6px; }
.tri { width: 19px; height: 12px; margin-left: 8px; }
.gray { color: #7b8499; }
.red { color: #d83b3b; }
.green { color: #1ea93c; }
.expand { margin: 8px auto 0; height: 20px; }

.topic { display: flex; align-items: center; gap: 24px; height: 95px; padding: 0 33px; font-size: 34px; }
.topic a { flex: 1; display: flex; align-items: center; }
.topic i { width: 2px; height: 34px; margin: 0 19px; background: #475268; }

.tabs { display: flex; align-items: center; gap: 67px; height: 121px; padding: 0 47px 0 76px; border-top: 17px solid #f4f6fa; border-bottom: 2px solid #eceef3; font-size: 42px; color: #475268; }
.tabs button { display: flex; align-items: center; gap: 24px; height: 102px; padding-bottom: 2px; position: relative; white-space: nowrap; }
.tabs .on { color: #20283a; }
.tabs .on::after { content: ""; position: absolute; left: 50%; bottom: 4px; width: 36px; height: 9px; margin-left: -18px; border-radius: 4px; background: #3078ec; }
.tabs .gear { margin-left: auto; }

.charts { display: grid; grid-template-columns: 719fr 330fr; column-gap: 8px; padding: 0 10px 0 13px; }
.plot { width: 100%; height: auto; overflow: visible; font-family: Lato, "Noto Sans CJK SC", sans-serif; }
.left, .right { min-width: 0; }
.legend { display: flex; align-items: center; gap: 18px; height: 46px; line-height: 42px; white-space: nowrap; color: #7b8499; font-family: Lato, "Noto Sans CJK SC", sans-serif; }
.legend > span { padding-bottom: 3px; }
.legend:first-child { height: 50px; }
.legend b { font-weight: 400; }
.pick { position: relative; align-self: stretch; width: 150px; background: #f4f6fa; }
.pick select { width: 100%; height: 100%; border: 0; padding: 0 30px 3px 0; appearance: none; background: none; font: 34px/42px Lato, "Noto Sans CJK SC", sans-serif; color: #20283a; text-align: center; text-align-last: center; }
.pick svg { position: absolute; right: 12px; top: 50%; width: 20px; height: 14px; margin-top: -7px; }
.s27 { font-size: 27px; }
.s20 { font-size: 20px; }
.s24 { font-size: 24px; }
.s31 { font-size: 31px; }
.c1 { color: #c818dc; }
.c2 { color: #d3bb15; }
.c3 { color: #12aee6; }
.c4 { color: #8676e0; }
.c5 { color: #b9a99d; }
.c6 { color: #f08c2c; }
.c7 { color: #1078e0; }
.c8 { color: #a83cc4; }

.grid { fill: none; stroke: #e8e9ef; stroke-width: 3; }
.grid.thin { stroke-width: 2; }
.axis { font-size: 34px; fill: #98a1b3; }
.end { text-anchor: end; }
.wick, .body, .line { fill: none; }
.wick { stroke-width: 2; }
.body { stroke-width: 13; }
.up { stroke: #e53535; }
.dn { stroke: #1ea93c; }
.line { stroke-width: 3; stroke-linejoin: round; }
.l1 { stroke: #c818dc; }
.l2 { stroke: #d3bb15; }
.l3 { stroke: #12aee6; }
.l4 { stroke: #8676e0; }
.l5 { stroke: #b9a99d; }
.l6 { stroke: #f08c2c; }
.l7 { stroke: #1078e0; }
.dash { stroke-width: 3; stroke-dasharray: 5 5; }
.low { font-size: 34px; fill: #b3b3b3; }
.tag rect { fill: #ff8b20; fill-opacity: 0.14; stroke: #ff8b20; stroke-opacity: 0.4; rx: 2px; }
.tag .tag-g { fill: #1ea93c; stroke: #1ea93c; }
.tag-t { font-size: 27px; font-weight: 700; fill: #f58c2c; text-anchor: middle; }
.tag-t .tag-n { fill: #1ea93c; }
.bs { font-size: 27px; font-weight: 700; fill: #fff; text-anchor: middle; }
.support { font-family: "Noto Sans CJK SC", sans-serif; font-size: 29px; font-weight: 500; fill: #d63a3a; }
.num { font-family: Lato, sans-serif; font-size: 32px; font-weight: 700; }
.avg { font-size: 31px; fill: #fff; text-anchor: middle; }
.kline { position: relative; }
.review { position: absolute; left: 0; top: 3px; display: flex; align-items: center; justify-content: center; gap: 14px; width: 265px; height: 77px; padding-bottom: 6px; border: 1px solid #a9c8ec; border-radius: 5px; background: #eff6ff; color: #2f73dd; font-size: 36px; }
.next { position: absolute; right: 0; top: 575px; z-index: 1; display: flex; align-items: center; justify-content: center; width: 49px; height: 78px; border-radius: 5px 0 0 5px; background: #6db0ffdd; }

.right { position: relative; }
.adjust { height: 50px; line-height: 46px; text-align: right; font-size: 34px; color: #7b8499; }
.keys { display: flex; justify-content: space-between; padding: 0 6px 0 22px; list-style: none; font-size: 28px; line-height: 34px; color: #475268; }
.keys li { display: flex; align-items: center; gap: 12px; }
.keys li::before { content: ""; width: 15px; height: 15px; background: #1ea93c; }
.keys .k-r::before { background: #e53535; }
.keys .k-b::before { background: #3078ec; }
.chips { margin-top: 182px; padding-left: 11px; font-size: 29px; line-height: 40px; color: #475268; white-space: nowrap; }
.row { display: flex; align-items: center; gap: 14px; height: 42px; }
.ratio { flex: 1; height: 34px; border-radius: 2px; overflow: hidden; background: #1ea93c; color: #fff; }
.ratio span { display: block; padding-left: 4px; line-height: 36px; height: 34px; background: #e53535; }
.seg { display: flex; width: max-content; height: 50px; border: 1px solid #dfe2ea; border-radius: 6px; }
.seg button { width: 144px; padding-bottom: 4px; line-height: 40px; color: #7b8499; }
.seg .on { border: 1px solid #20283a; border-radius: 6px; background: #f4f6fa; color: #475268; }
.chips p { line-height: 30px; margin-bottom: 14px; }
.full { display: flex; align-items: center; justify-content: center; width: 72px; height: 72px; margin: 74px 2px 0 auto; border-radius: 50%; background: #e7e7e7; }
.foot { display: flex; justify-content: space-between; align-items: center; margin-top: 34px; padding-left: 11px; font-size: 29px; line-height: 44px; color: #9aa3b5; }
.foot a { display: flex; align-items: center; gap: 12px; }

.bar { flex: none; display: grid; grid-template-columns: repeat(4, 131fr) 274fr 257fr; height: 144px; padding: 0 17px 0 8px; background: #fff; border-top: 3px solid #e8e9f0; position: relative; }
.item { display: flex; flex-direction: column; align-items: center; padding-top: 13px; font-size: 28px; line-height: 62px; white-space: nowrap; }
.item svg { overflow: visible; }
.trade { position: relative; height: 103px; margin-top: 19px; color: #fff; font-size: 40px; }
.trade svg { position: absolute; inset: 0; width: 100%; height: 100%; }
.trade span { position: relative; display: block; line-height: 100px; }
.buy { margin-left: 17px; }
.buy span { padding-right: 14px; }
.sell span { padding-left: 14px; }
.home { flex: none; height: 44px; padding-top: 17px; background: #ededed; }
.home i { display: block; width: 38.6%; height: 10px; margin: 0 auto; border-radius: 5px; background: #2e2e2e; }
```
